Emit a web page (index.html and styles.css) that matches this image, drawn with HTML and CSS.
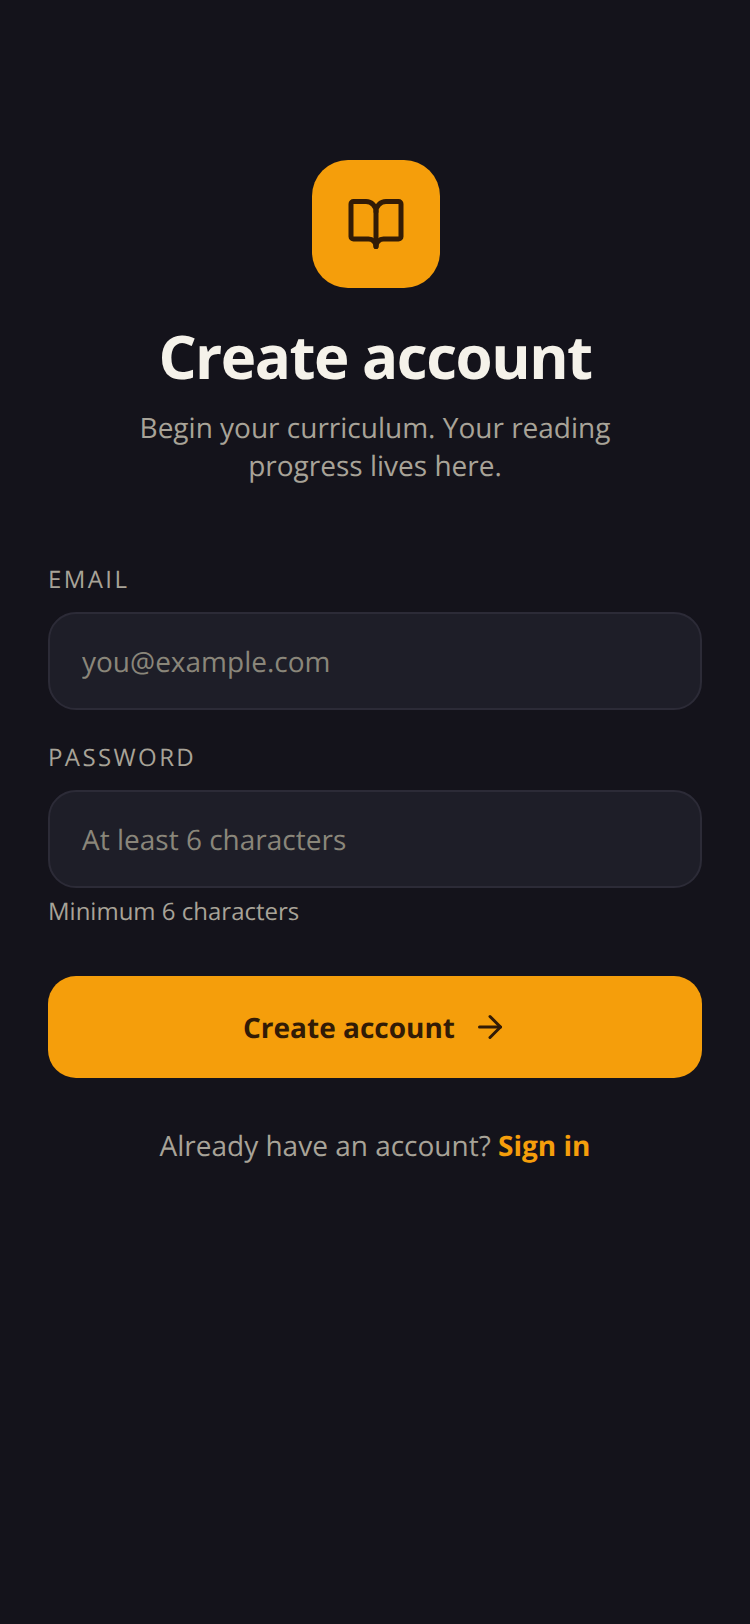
FILE: index.html
```html
<!DOCTYPE html>
<html lang="en">
<head>
    <meta charset="UTF-8">
    <meta name="viewport" content="width=device-width, initial-scale=1.0">
    <title>Create account</title>
    <link rel="stylesheet" href="styles.css">
</head>
<body>
    <main class="screen">
        <div class="logo">
            <svg width="60" height="60" viewBox="0 0 24 24" fill="none" stroke="#321b06" stroke-width="2" stroke-linecap="round" stroke-linejoin="round">
                <path d="M12 7v14"/>
                <path d="M3 18a1 1 0 0 1-1-1V4a1 1 0 0 1 1-1h5a4 4 0 0 1 4 4 4 4 0 0 1 4-4h5a1 1 0 0 1 1 1v13a1 1 0 0 1-1 1h-6a3 3 0 0 0-3 3 3 3 0 0 0-3-3z"/>
            </svg>
        </div>
        <h1 class="title">Create account</h1>
        <p class="subtitle">Begin your curriculum. Your reading progress lives here.</p>

        <form class="form">
            <label class="label" for="email">EMAIL</label>
            <input class="input" type="text" id="email" placeholder="you@example.com">

            <label class="label label-next" for="password">PASSWORD</label>
            <input class="input" type="text" id="password" placeholder="At least 6 characters">
            <p class="hint">Minimum 6 characters</p>

            <button class="submit" type="button">
                <span>Create account</span>
                <svg width="36" height="36" viewBox="0 0 24 24" fill="none" stroke="#321b06" stroke-width="2" stroke-linecap="round" stroke-linejoin="round">
                    <path d="M5 12h14"/>
                    <path d="m12 5 7 7-7 7"/>
                </svg>
            </button>
        </form>

        <p class="switch">Already have an account? <a class="switch-link" href="#">Sign in</a></p>
    </main>
</body>
</html>
```

FILE: styles.css
```css
* {
    box-sizing: border-box;
}

body {
    margin: 0;
    background: #14131b;
    font-family: 'Open Sans', sans-serif;
    color: #f5f2ea;
    text-rendering: geometricPrecision;
}

.screen {
    min-height: 1624px;
    padding: 160px 48px 0;
    display: flex;
    flex-direction: column;
    align-items: center;
}

.logo {
    width: 128px;
    height: 128px;
    margin-left: 1px;
    border-radius: 36px;
    background: #f59e0b;
    display: flex;
    align-items: center;
    justify-content: center;
}

.title {
    margin: 30px 0 0;
    font-size: 60px;
    line-height: 76px;
    font-weight: 700;
    letter-spacing: -1.5px;
    color: #f5f2ea;
}

.subtitle {
    width: 520px;
    margin: 15px 0 0;
    font-size: 28px;
    line-height: 38px;
    text-align: center;
    color: #a8a398;
}

.form {
    width: 100%;
    margin-top: 79px;
    display: flex;
    flex-direction: column;
}

.label {
    font-size: 24px;
    line-height: 32px;
    letter-spacing: 2.400px;
    color: #a8a398;
}

.label-next {
    margin-top: 32px;
}

.input {
    width: 100%;
    height: 98px;
    margin-top: 16px;
    padding: 1px 32px 0;
    background: #1e1e28;
    border: 2px solid #2c2b37;
    border-radius: 28px;
    font-family: inherit;
    font-size: 28px;
    color: #f5f2ea;
    outline: none;
    text-rendering: inherit;
}

.input::placeholder {
    color: #8a867a;
    opacity: 1;
}

.hint {
    margin: 8px 0 0;
    font-size: 24px;
    line-height: 32px;
    color: #a8a398;
}

.submit {
    height: 102px;
    margin-top: 48px;
    border: none;
    border-radius: 28px;
    background: #f59e0b;
    display: flex;
    align-items: center;
    justify-content: center;
    gap: 17px;
    padding: 2px 0 0 1px;
    font-family: inherit;
    font-size: 28px;
    font-weight: 700;
    color: #321b06;
    text-rendering: inherit;
}

.submit svg {
    margin-top: -2px;
}

.switch {
    margin: 48px 0 0;
    font-size: 28px;
    line-height: 40px;
    color: #a8a398;
}

.switch-link {
    font-weight: 700;
    color: #f59e0b;
    text-decoration: none;
}
```
